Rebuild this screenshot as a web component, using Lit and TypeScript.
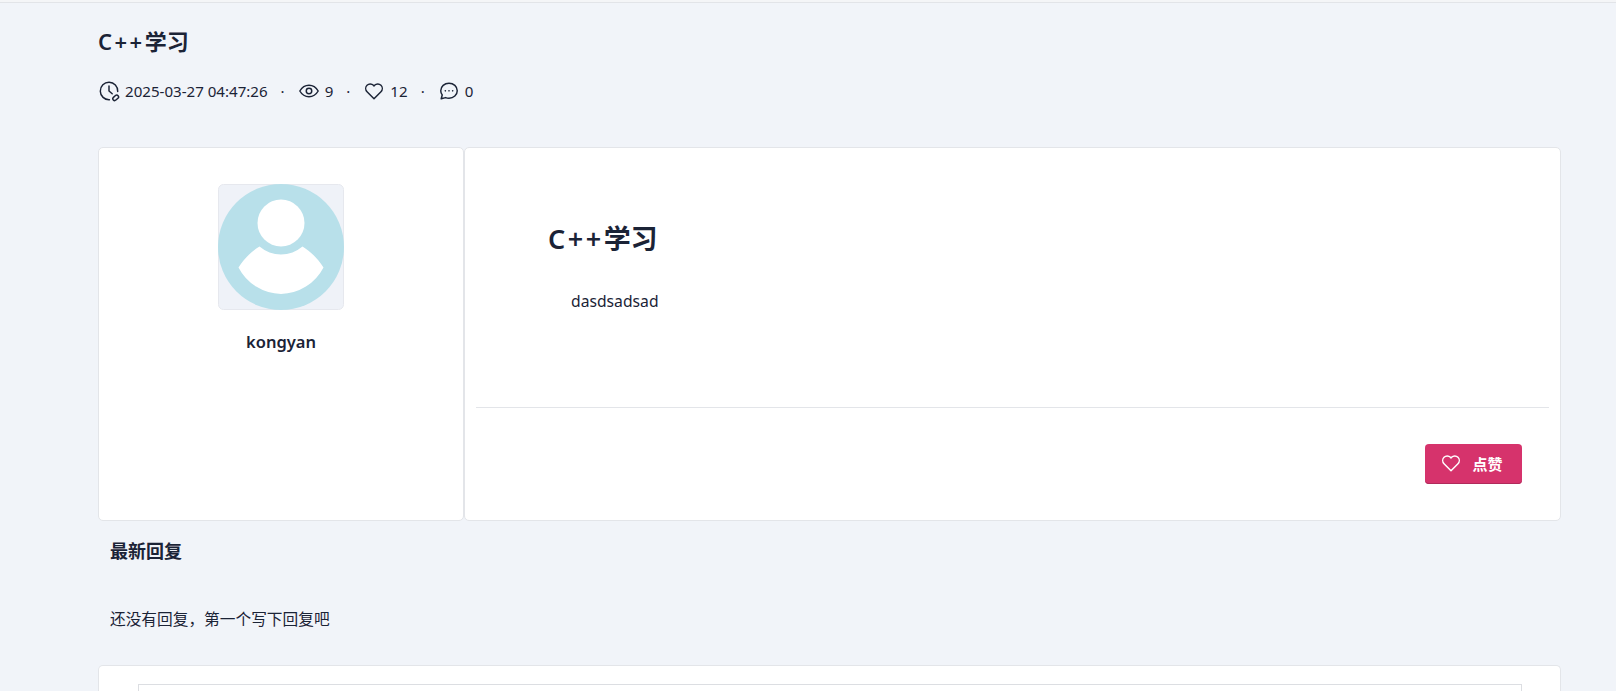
import { LitElement, html, css, svg } from "lit";
import { customElement } from "lit/decorators.js";

@customElement("app-root")
export class AppRoot extends LitElement {
  static styles = css`
    :host { display: block; height: 691px; overflow: hidden; background: #f1f4f9; color: #1b2336;
      font-family: "Noto Sans", "Noto Sans CJK SC", sans-serif; }
    .topline { height: 3px; box-sizing: border-box; border-bottom: 1px solid #e2e4e8; background: #f4f5f7; }
    .wrap { padding: 0 55px 0 98px; }
    .head { height: 144px; box-sizing: border-box; padding-top: 24px; }
    h1 { margin: 0; font-size: 22px; line-height: 28px; font-weight: 600; }
    .latin { letter-spacing: 2.500px; }
    .meta { display: flex; align-items: center; margin-top: 24px; height: 24px; font-size: 15.100px; }
    .meta svg { width: 22px; height: 22px; margin-right: 5px; flex: none; }
    .dot { margin: 0 13px; }
    .row { display: flex; height: 374px; }
    .card { background: #fff; border: 1px solid #e3e5e9; border-radius: 5px; box-sizing: border-box; }
    .side { width: 366px; flex: none; display: flex; flex-direction: column; align-items: center; padding-top: 36px; }
    .avatar { display: block; width: 126px; height: 126px; }
    .name { margin-top: 20px; font-size: 16.500px; line-height: 24px; font-weight: 600; }
    .main { flex: 1; padding: 0 11px; display: flex; flex-direction: column; }
    .body { height: 260px; box-sizing: border-box; padding: 75px 0 0 72px; border-bottom: 1px solid #e3e5e9; }
    h2 { margin: 0; font-size: 27px; line-height: 32px; font-weight: 600; }
    .text { margin: 34px 0 0 23px; font-size: 15.700px; line-height: 24px; }
    .actions { display: flex; justify-content: flex-end; padding: 36px 27px 0 0; }
    .like { display: flex; align-items: center; justify-content: center; gap: 10px; width: 97px; height: 40px; box-sizing: border-box;
      border: 0; border-radius: 4px; background: #d6336c; box-shadow: inset 0 -1px 0 #b02a5b; color: #fff; padding: 0 4px 2px 0; font: 600 15px "Noto Sans", "Noto Sans CJK SC", sans-serif; }
    .like svg { width: 22px; height: 22px; }
    h3 { margin: 0; padding: 16px 0 0 12px; font-size: 18px; line-height: 28px; font-weight: 600; }
    .empty { margin: 0; padding: 42px 0 0 12px; font-size: 15.700px; line-height: 24px; }
    .editor { margin-top: 34px; height: 60px; padding: 18px 38px 0 39px; border-bottom: 0; border-radius: 5px 5px 0 0; }
    .inner { height: 60px; border: 1px solid #dcdee2; }
  `;

  render() {
    const heart = svg`<path d="M12 20.500 4.400 12.800a5 5 0 0 1 0-7 4.900 4.900 0 0 1 7 0l.6.7.6-.7a4.900 4.900 0 0 1 7 0 5 5 0 0 1 0 7Z" fill="none" stroke="currentColor" stroke-width="1.6" stroke-linejoin="round"/>`;
    return html`
      <div class="topline"></div>
      <div class="wrap">
        <div class="head">
          <h1><span class="latin">C++</span>学习</h1>
          <div class="meta">
            <svg viewBox="0 0 24 24" fill="none" stroke="currentColor" stroke-width="1.6" stroke-linecap="round" stroke-linejoin="round">
              <path d="M12.500 21.500A9.500 9.500 0 1 1 21.500 12.500"/><path d="M12 6.500V12l3.500 3"/>
              <rect x="15.800" y="17.400" width="7" height="4" rx="2" transform="rotate(-42 19.300 19.400)"/>
            </svg>
            <span>2025-03-27 04:47:26</span><span class="dot">·</span>
            <svg viewBox="0 0 24 24" fill="none" stroke="currentColor" stroke-width="1.6">
              <path d="M2 12c2.400-4.200 5.800-6.300 10-6.300s7.600 2.100 10 6.300c-2.400 4.200-5.800 6.300-10 6.300S4.400 16.200 2 12Z"/><circle cx="12" cy="12" r="3"/>
            </svg>
            <span>9</span><span class="dot">·</span>
            <svg viewBox="0 0 24 24">${heart}</svg>
            <span>12</span><span class="dot">·</span>
            <svg viewBox="0 0 24 24" fill="none" stroke="currentColor" stroke-width="1.6" stroke-linejoin="round">
              <path d="M12 3.500c5 0 9 3.600 9 8.200s-4 8.200-9 8.200c-1.300 0-2.600-.2-3.700-.7L3.500 20.500l1.100-4.200C3.600 14.900 3 13.400 3 11.700 3 7.100 7 3.500 12 3.500Z"/>
              <path d="M8 11.800h.01M12 11.800h.01M16 11.800h.01" stroke-linecap="round" stroke-width="1.8"/>
            </svg>
            <span>0</span>
          </div>
        </div>
        <div class="row">
          <div class="card side">
            <svg class="avatar" viewBox="0 0 126 126">
              <rect x=".5" y=".5" width="125" height="125" rx="5" fill="#eff2f8" stroke="#e6e8ee"/>
              <circle cx="63" cy="63" r="63" fill="#b8e0ea"/>
              <circle cx="63" cy="39" r="23.500" fill="#fff"/>
              <path d="M41.500 62.500a33 33 0 0 0 43 0C93.500 68 100.500 75.500 105.500 83.500A49 49 0 0 1 63 110 49 49 0 0 1 20.500 83.500C25.500 75.500 32.500 68 41.500 62.500Z" fill="#fff"/>
            </svg>
            <div class="name">kongyan</div>
          </div>
          <div class="card main">
            <div class="body">
              <h2><span class="latin">C++</span>学习</h2>
              <p class="text">dasdsadsad</p>
            </div>
            <div class="actions">
              <button class="like"><svg viewBox="0 0 24 24">${heart}</svg><span>点赞</span></button>
            </div>
          </div>
        </div>
        <h3>最新回复</h3>
        <p class="empty">还没有回复，第一个写下回复吧</p>
        <div class="card editor"><div class="inner"></div></div>
      </div>
    `;
  }
}
